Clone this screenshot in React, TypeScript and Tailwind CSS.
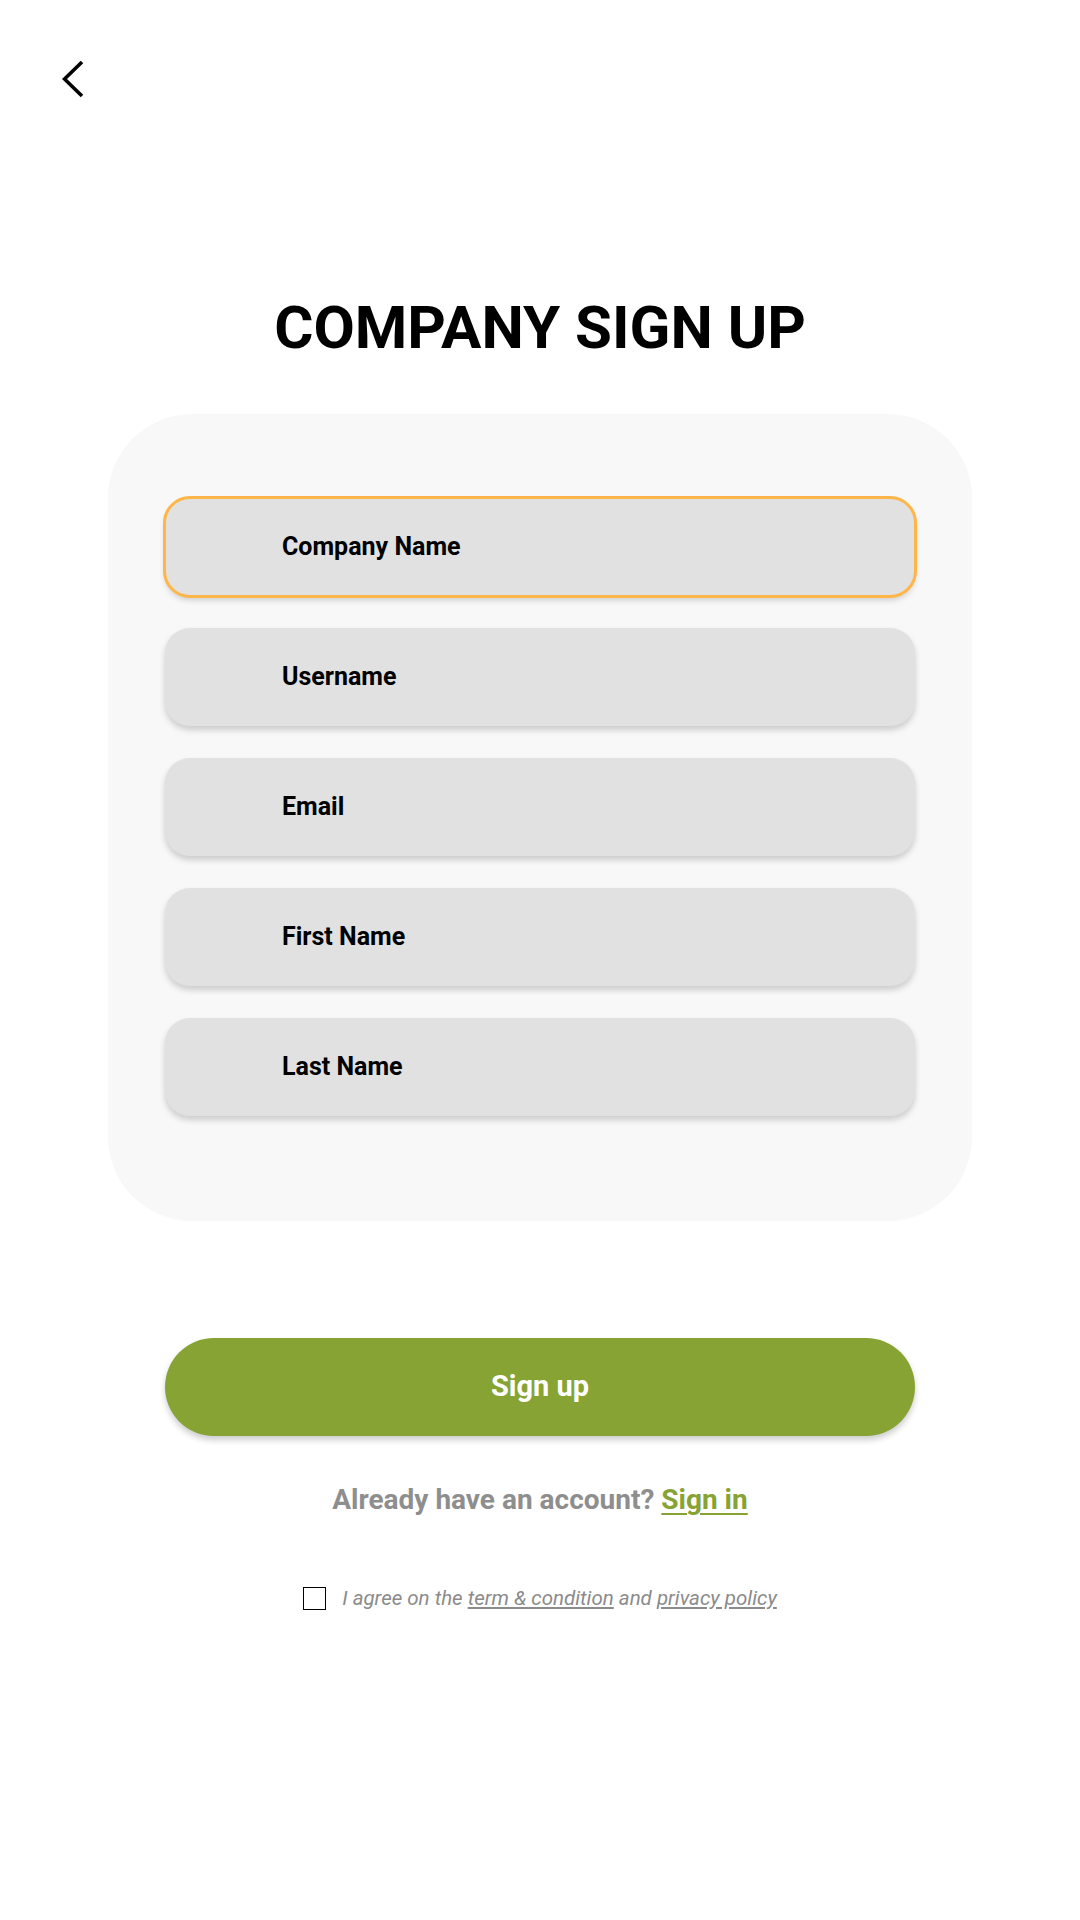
const fields = ["Company Name", "Username", "Email", "First Name", "Last Name"];

const BackIcon = () => (
  <svg width="22" height="38" viewBox="0 0 22 38" fill="none">
    <path d="M20 2 L2.5 19 L20 36" stroke="#000" strokeWidth="3.6" />
  </svg>
);

const Field = ({ label, active }: { label: string; active?: boolean }) => (
  <div
    className={
      active
        ? "flex h-[98px] w-[750px] items-center rounded-[25px] bg-[#e1e1e1] pl-[117px] shadow-[0_4px_6px_rgba(0,0,0,0.18)] outline-3 -outline-offset-1 outline-[#ffb547]"
        : "flex h-[98px] w-[750px] items-center rounded-[25px] bg-[#e1e1e1] pl-[117px] shadow-[0_4px_6px_rgba(0,0,0,0.18)]"
    }
  >
    <span className="text-[25px] font-bold text-black">{label}</span>
  </div>
);

export default function App() {
  return (
    <div className="flex min-h-[1920px] w-[1080px] flex-col bg-white font-['Roboto',sans-serif]">
      <div className="ml-[62px] mt-[60px]">
        <BackIcon />
      </div>

      <h1 className="mt-[200px] text-center text-[60px] font-bold leading-[60px] text-black">
        COMPANY SIGN UP
      </h1>

      <div className="mx-auto mt-[56px] flex w-[864px] flex-col items-center gap-[32px] rounded-[84px] bg-[#f8f8f8] pb-[105px] pt-[84px]">
        {fields.map((f, i) => (
          <Field key={f} label={f} active={i === 0} />
        ))}
      </div>

      <button className="mx-auto mt-[117px] flex h-[98px] w-[750px] items-center justify-center rounded-full bg-[#86a334] shadow-[0_4px_6px_rgba(0,0,0,0.2)]">
        <span className="text-[29px] font-bold text-white">Sign up</span>
      </button>

      <p className="mt-[48px] text-center text-[28px] font-bold leading-[32px] text-[#8e8e8e]">
        Already have an account?{" "}
        <a className="text-[#86a334] underline decoration-2 underline-offset-4">Sign in</a>
      </p>

      <div className="mt-[70px] flex h-6 items-center justify-center gap-[16px]">
        <span className="h-[23px] w-[23px] border-[1.5px] border-black" />
        <span className="text-[20.5px] italic leading-6 text-[#8b8b8b]">
          I agree on the <a className="underline underline-offset-2">term &amp; condition</a> and{" "}
          <a className="underline underline-offset-2">privacy policy</a>
        </span>
      </div>
    </div>
  );
}
